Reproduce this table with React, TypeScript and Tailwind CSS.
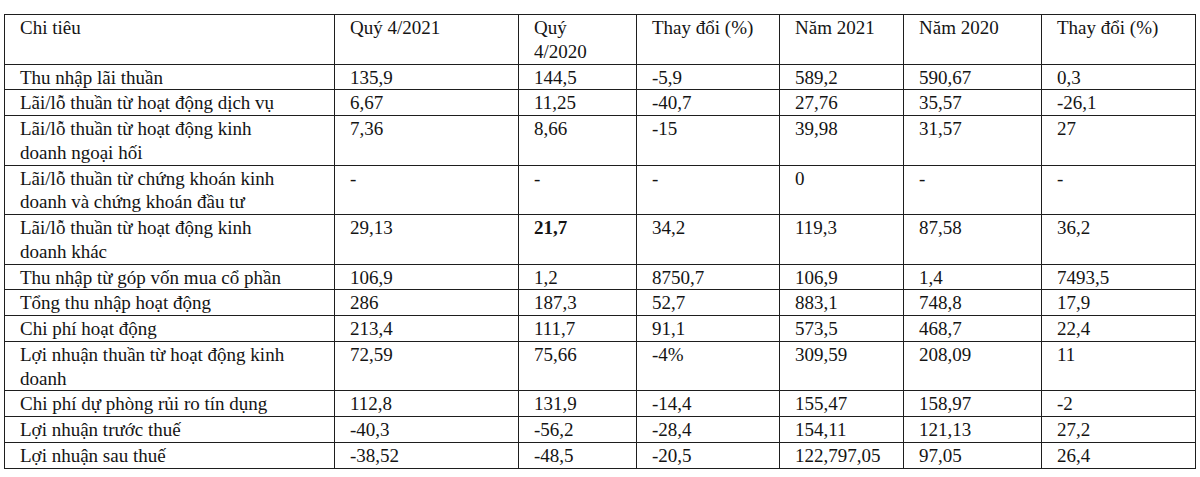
type Row = {
  label: React.ReactNode
  cells: React.ReactNode[]
}

const rows: Row[] = [
  { label: 'Thu nhập lãi thuần', cells: ['135,9', '144,5', '-5,9', '589,2', '590,67', '0,3'] },
  { label: 'Lãi/lỗ thuần từ hoạt động dịch vụ', cells: ['6,67', '11,25', '-40,7', '27,76', '35,57', '-26,1'] },
  {
    label: (
      <>
        Lãi/lỗ thuần từ hoạt động kinh
        <br />
        doanh ngoại hối
      </>
    ),
    cells: ['7,36', '8,66', '-15', '39,98', '31,57', '27'],
  },
  {
    label: (
      <>
        Lãi/lỗ thuần từ chứng khoán kinh
        <br />
        doanh và chứng khoán đầu tư
      </>
    ),
    cells: ['-', '-', '-', '0', '-', '-'],
  },
  {
    label: (
      <>
        Lãi/lỗ thuần từ hoạt động kinh
        <br />
        doanh khác
      </>
    ),
    cells: ['29,13', <b key="b">21,7</b>, '34,2', '119,3', '87,58', '36,2'],
  },
  { label: 'Thu nhập từ góp vốn mua cổ phần', cells: ['106,9', '1,2', '8750,7', '106,9', '1,4', '7493,5'] },
  { label: 'Tổng thu nhập hoạt động', cells: ['286', '187,3', '52,7', '883,1', '748,8', '17,9'] },
  { label: 'Chi phí hoạt động', cells: ['213,4', '111,7', '91,1', '573,5', '468,7', '22,4'] },
  {
    label: (
      <>
        Lợi nhuận thuần từ hoạt động kinh
        <br />
        doanh
      </>
    ),
    cells: ['72,59', '75,66', '-4%', '309,59', '208,09', '11'],
  },
  { label: 'Chi phí dự phòng rủi ro tín dụng', cells: ['112,8', '131,9', '-14,4', '155,47', '158,97', '-2'] },
  { label: 'Lợi nhuận trước thuế', cells: ['-40,3', '-56,2', '-28,4', '154,11', '121,13', '27,2'] },
  { label: 'Lợi nhuận sau thuế', cells: ['-38,52', '-48,5', '-20,5', '122,797,05', '97,05', '26,4'] },
]

const cell =
  'border border-[#1e1e1e] pl-[15px] pr-1 pt-px align-top whitespace-nowrap font-normal text-left'

export default function App() {
  return (
    <div className="min-h-screen bg-white pt-[14px] pl-[4px] text-[19px] leading-[23.75px] text-[#141414] [font-family:Liberation_Serif,Times_New_Roman,serif]">
      <table className="table-fixed border-collapse w-[1191px]">
        <colgroup>
          <col className="w-[330px]" />
          <col className="w-[184px]" />
          <col className="w-[118px]" />
          <col className="w-[143px]" />
          <col className="w-[124px]" />
          <col className="w-[138px]" />
          <col className="w-[154px]" />
        </colgroup>
        <thead>
          <tr>
            <th className={cell}>Chi tiêu</th>
            <th className={cell}>Quý 4/2021</th>
            <th className={cell}>
              Quý
              <br />
              4/2020
            </th>
            <th className={cell}>Thay đổi (%)</th>
            <th className={cell}>Năm 2021</th>
            <th className={cell}>Năm 2020</th>
            <th className={cell}>Thay đổi (%)</th>
          </tr>
        </thead>
        <tbody>
          {rows.map((r, i) => (
            <tr key={i}>
              <td className={cell}>{r.label}</td>
              {r.cells.map((c, j) => (
                <td key={j} className={cell}>
                  {c}
                </td>
              ))}
            </tr>
          ))}
        </tbody>
      </table>
    </div>
  )
}
